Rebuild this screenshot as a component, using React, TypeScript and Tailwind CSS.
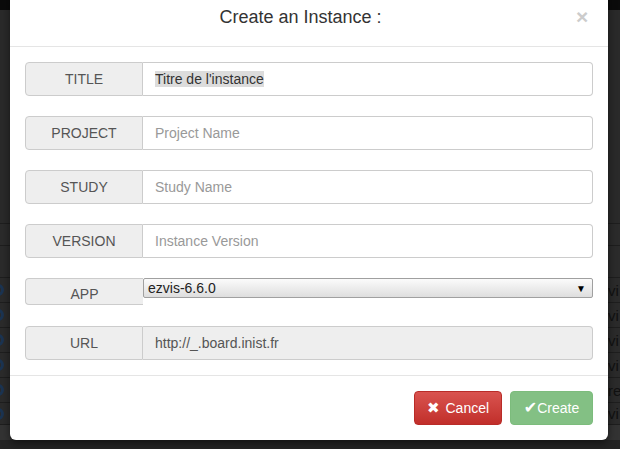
import React from "react";

const rows = [
  { h: 22, txt: "", icon: false },
  { h: 32, txt: "", icon: false },
  { h: 25, txt: "vi", icon: true },
  { h: 25, txt: "vi", icon: true },
  { h: 25, txt: "vi", icon: true },
  { h: 25, txt: "vi", icon: true },
  { h: 25, txt: "re", icon: true },
  { h: 22, txt: "vi", icon: true },
];

function Field({ label, placeholder, value, disabled }: { label: string; placeholder?: string; value?: React.ReactNode; disabled?: boolean }) {
  return (
    <div className="flex h-[34px] mb-[20px]">
      <div className="w-[118px] shrink-0 flex items-center justify-center bg-[#eeeeee] border border-[#cccccc] rounded-l-[4px] text-[14px] text-[#555555]">
        {label}
      </div>
      <div
        className={
          "flex-1 flex items-center px-[12px] border border-l-0 border-[#cccccc] rounded-r-[4px] text-[14px] " +
          (disabled ? "bg-[#eeeeee] text-[#555555]" : "bg-white text-[#999999]")
        }
      >
        {value ?? placeholder}
      </div>
    </div>
  );
}

export default function App() {
  return (
    <div className="relative w-[620px] h-[449px] overflow-hidden bg-[#2a2a2a] font-['Liberation_Sans',Arial,sans-serif]">
      {/* backdrop page content */}
      <div className="flex flex-col">
        <div className="h-[10px] bg-[#0b0b0b]" />
        <div className="h-[213px]" />
        {rows.map((r, i) => (
          <div
            key={i}
            style={{ height: r.h }}
            className="flex items-center justify-between border-t border-[#1e1e1e] bg-[#2b2b2b]"
          >
            <div className="w-[10px] overflow-hidden">
              {r.icon && <div className="ml-[-8px] w-[12px] h-[12px] rounded-full border-[3px] border-[#1b3452]" />}
            </div>
            <div className="w-[12px] overflow-hidden text-[15px] leading-none text-[#111111] whitespace-nowrap">{r.txt}</div>
          </div>
        ))}
        <div className="h-[16px] bg-[#333333] border-t border-[#1e1e1e]" />
        <div className="h-[20px] bg-[#232323]" />
      </div>

      {/* modal */}
      <div className="absolute left-[10px] top-[-10px] w-[598px] h-[450px] bg-white rounded-[6px] shadow-[0_3px_9px_rgba(0,0,0,0.5)] flex flex-col">
        <div className="h-[57px] flex items-start px-[15px] pt-[15px] border-b border-[#e5e5e5]">
          <div className="flex-1 text-center text-[18px] leading-[25px] text-[#333333]">Create an Instance :</div>
          <div className="w-[16px] text-[21px] leading-[21px] font-bold text-[#cccccc] mt-[1px] mr-[1px]">×</div>
        </div>

        <div className="px-[15px] pt-[15px] pb-[15px] border-b border-[#e5e5e5]">
          <Field
            label="TITLE"
            value={<span className="bg-[#dcdcdc] text-[#333333] leading-[16px]">Titre de l'instance</span>}
          />
          <Field label="PROJECT" placeholder="Project Name" />
          <Field label="STUDY" placeholder="Study Name" />
          <Field label="VERSION" placeholder="Instance Version" />

          <div className="flex h-[27px] mb-[21px]">
            <div className="w-[118px] shrink-0 flex items-center justify-center bg-[#eeeeee] border border-r-0 border-[#cccccc] rounded-l-[4px] text-[14px] text-[#555555] pt-[5px]">
              APP
            </div>
            <div className="flex-1 self-start h-[20px] flex items-center justify-between pl-[4px] pr-[6px] border border-[#a0a0a0] rounded-[2px] bg-gradient-to-b from-[#fbfbfb] to-[#dedede] text-[14px] text-[#222222]">
              <span>ezvis-6.6.0</span>
              <span className="text-[10px] text-black">▼</span>
            </div>
          </div>

          <div className="flex h-[34px]">
            <div className="w-[118px] shrink-0 flex items-center justify-center bg-[#eeeeee] border border-[#cccccc] rounded-l-[4px] text-[14px] text-[#555555]">
              URL
            </div>
            <div className="flex-1 flex items-center px-[12px] border border-l-0 border-[#cccccc] rounded-r-[4px] text-[14px] bg-[#eeeeee] text-[#555555]">
              http://_.board.inist.fr
            </div>
          </div>
        </div>

        <div className="flex justify-end gap-[8px] px-[15px] pt-[15px]">
          <div className="w-[88px] h-[34px] flex items-center justify-center gap-[6px] rounded-[4px] border border-[#b92c28] bg-gradient-to-b from-[#d9534f] to-[#c12e2a] text-white text-[14px]">
            <span className="text-[15px] leading-none font-['DejaVu_Sans',sans-serif]">✖</span>
            <span>Cancel</span>
          </div>
          <div className="w-[83px] h-[34px] flex items-center justify-center rounded-[4px] border border-[#7cbc7c] bg-[#83c084] text-white text-[14px]">
            <span className="text-[16px] leading-none font-['DejaVu_Sans',sans-serif]">✔</span>
            <span>Create</span>
          </div>
        </div>
      </div>
    </div>
  );
}
